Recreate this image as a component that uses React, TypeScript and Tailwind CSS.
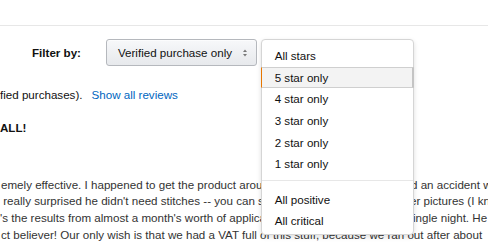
export default function App() {
  const items = ["All stars", "5 star only", "4 star only", "3 star only", "2 star only", "1 star only"];
  return (
    <div className="relative w-[488px] h-[244px] overflow-hidden bg-white text-[#111] text-[11.6px] font-['Liberation_Sans',Arial,sans-serif]">
      <div className="h-[26px] border-b border-[#e7e7e7]" />
      <div className="mt-[13px] flex items-center h-[27px]">
        <span className="pl-[32px] font-bold">Filter by:</span>
        <div className="ml-[25px] h-[27px] w-[151px] flex items-center justify-between pl-[11px] pr-[9px] rounded-[3px] border border-[#b5b8bd] bg-gradient-to-b from-[#f7f8fa] to-[#e7e9ec] shadow-[0_1px_0_rgba(255,255,255,0.6)_inset]">
          <span>Verified purchase only</span>
          <svg width="4" height="8" viewBox="0 0 4 8">
            <path d="M0 3 L2 0.5 L4 3 Z" fill="#777" />
            <path d="M0 5 L2 7.5 L4 5 Z" fill="#777" />
          </svg>
        </div>
      </div>
      <div className="mt-[20.6px] leading-[16.7px] whitespace-nowrap">
        <span>fied purchases).</span>
        <span className="ml-[9px] text-[#0066c0]">Show all reviews</span>
      </div>
      <div className="mt-[16.3px] leading-[16.7px] font-bold">ALL!</div>
      <div className="mt-[40.3px] leading-[16.7px] text-[#333] whitespace-nowrap">
        <div className="flex">
          <span className="w-[261px] shrink-0 overflow-hidden pl-[1px]">emely effective. I happened to get the product around the time</span>
          <span className="w-[150px] shrink-0" />
          <span>d an accident while</span>
        </div>
        <div className="flex">
          <span className="w-[261px] shrink-0 overflow-hidden">&nbsp;really surprised he didn't need stitches -- you can see the</span>
          <span className="w-[149px] shrink-0" />
          <span>er pictures (I know</span>
        </div>
        <div className="flex">
          <span className="w-[261px] shrink-0 overflow-hidden">'s the results from almost a month's worth of application</span>
          <span className="w-[152px] shrink-0" />
          <span>ingle night. He</span>
        </div>
        <div className="pl-[1px]">ct believer! Our only wish is that we had a VAT full of this stuff, because we ran out after about</div>
      </div>

      <div className="absolute left-[261px] top-[39px] w-[153px] h-[196px] bg-white border border-[#d5d5d5] rounded-[4px] shadow-[0_2px_5px_rgba(0,0,0,0.13)] pt-[5px]">
        {items.map((t, i) =>
          i === 1 ? (
            <div key={t} className="-mx-px h-[21.67px] flex items-center pl-[12.7px] bg-[#f3f3f3] border-y border-[#cfcfcf] border-l border-l-[#e77600] border-r-2 border-r-[#c4c4c4]">
              {t}
            </div>
          ) : (
            <div key={t} className="h-[21.67px] flex items-center pl-[12.7px]">
              {t}
            </div>
          )
        )}
        <div className="mt-[5px] mb-[7.5px] border-t border-[#e7e7e7]" />
        <div className="h-[21.67px] flex items-center pl-[12.7px]">All positive</div>
        <div className="h-[21.67px] flex items-center pl-[12.7px]">All critical</div>
      </div>
    </div>
  );
}
